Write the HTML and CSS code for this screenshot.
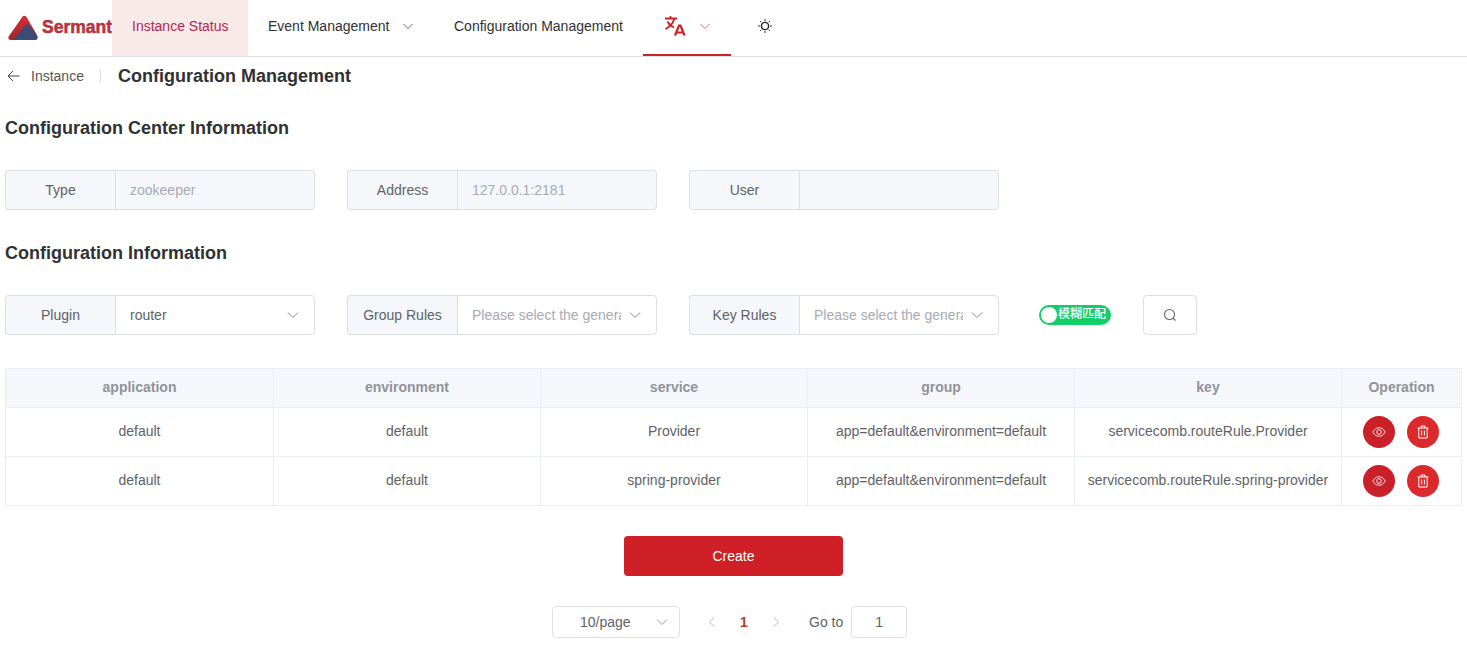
FILE: index.html
```html
<!DOCTYPE html>
<html lang="en">
    <head>
        <meta charset="UTF-8">
        <meta name="viewport" content="width=device-width, initial-scale=1.0">
        <title>Configuration Management</title>
        <link rel="stylesheet" href="styles.css">
    </head>
    <body>
        <!-- top menu -->
        <div class="header">
            <div class="logo">
                <svg class="logo-mark" width="30" height="25" viewBox="0 0 30 25">
                    <defs>
                        <linearGradient id="logoRed" x1="0.7" y1="0" x2="0.1" y2="1">
                            <stop offset="0" stop-color="#d92c34"/>
                            <stop offset="1" stop-color="#a3242c"/>
                        </linearGradient>
                    </defs>
                    <path d="M15 1 Q17 0 18.500 2 L29 20 Q31 25 26 25 L3 25 Q-1 25 1 21 Z" fill="url(#logoRed)"/>
                    <path d="M18.500 9 Q19.500 8 20.500 9.500 L29 21 Q30.500 25 26 25 L8 25 Q5.500 25 7 22.500 Z" fill="#3c4a75"/>
                </svg>
                <span class="logo-text">Sermant</span>
            </div>
            <div class="menu-item active">Instance Status</div>
            <div class="menu-item event">Event Management
                <svg class="chevron menu-chevron" viewBox="0 0 12 12"><path d="M1.500 4 L6 8.500 L10.500 4"/></svg>
            </div>
            <div class="menu-item">Configuration Management</div>
            <div class="menu-item lang">
                <svg class="lang-icon" width="22" height="22" viewBox="0 0 22 22">
                    <path d="M1 3.500 H13 M6.500 1 V3.500 M10.500 3.500 C9 8.500 5.500 12 1.500 14 M3.500 6.500 C5 9.500 7.500 11.500 10 12.500" fill="none" stroke="#cf2027" stroke-width="1.800"/>
                    <path d="M11 20.500 L15 10.500 H16.500 L20.500 20.500 M12.500 17.500 H19" fill="none" stroke="#cf2027" stroke-width="2.200"/>
                </svg>
                <svg class="chevron lang-chevron" viewBox="0 0 12 12"><path d="M1.500 4 L6 8.500 L10.500 4"/></svg>
            </div>
            <div class="theme">
                <svg width="14" height="14" viewBox="0 0 14 14">
                    <circle cx="7" cy="7" r="3.600" fill="none" stroke="#222" stroke-width="1.400"/>
                    <path d="M7 0 V2 M7 12 V14 M0 7 H2 M12 7 H14 M2 2 L3.300 3.300 M10.700 10.700 L12 12 M2 12 L3.300 10.700 M10.700 3.300 L12 2" stroke="#333" stroke-width="1"/>
                </svg>
            </div>
        </div>

        <div class="page-head">
            <svg class="back" width="14" height="14" viewBox="0 0 14 14"><path d="M13.500 7 H2 M7 2 L2 7 L7 12" fill="none" stroke="#444" stroke-width="1"/></svg>
            <span class="back-text">Instance</span>
            <span class="divider"></span>
            <span class="page-title">Configuration Management</span>
        </div>

        <div class="content">
            <div class="section-title">Configuration Center Information</div>
            <div class="form-row">
                <div class="field">
                    <div class="field-label">Type</div>
                    <div class="field-value disabled">zookeeper</div>
                </div>
                <div class="field">
                    <div class="field-label">Address</div>
                    <div class="field-value disabled">127.0.0.1:2181</div>
                </div>
                <div class="field">
                    <div class="field-label">User</div>
                    <div class="field-value disabled"></div>
                </div>
            </div>

            <div class="section-title second">Configuration Information</div>
            <div class="form-row">
                <div class="field">
                    <div class="field-label">Plugin</div>
                    <div class="field-value select">
                        <span class="select-text">router</span>
                        <svg class="chevron" viewBox="0 0 12 12"><path d="M1 3.500 L6 8.500 L11 3.500"/></svg>
                    </div>
                </div>
                <div class="field">
                    <div class="field-label">Group Rules</div>
                    <div class="field-value select">
                        <span class="select-text placeholder">Please select the generation rule</span>
                        <svg class="chevron" viewBox="0 0 12 12"><path d="M1 3.500 L6 8.500 L11 3.500"/></svg>
                    </div>
                </div>
                <div class="field">
                    <div class="field-label">Key Rules</div>
                    <div class="field-value select">
                        <span class="select-text placeholder">Please select the generation rule</span>
                        <svg class="chevron" viewBox="0 0 12 12"><path d="M1 3.500 L6 8.500 L11 3.500"/></svg>
                    </div>
                </div>
                <div class="switch">
                    <span class="switch-dot"></span>
                    <span class="switch-text">模糊匹配</span>
                </div>
                <div class="search-btn">
                    <svg width="14" height="14" viewBox="0 0 14 14"><circle cx="6.500" cy="6.500" r="5" fill="none" stroke="#666" stroke-width="1.100"/><path d="M10 10 L12.500 12.500" stroke="#666" stroke-width="1.100"/></svg>
                </div>
            </div>

            <table class="table">
                <colgroup>
                    <col class="col-wide"><col class="col-mid"><col class="col-mid"><col class="col-mid"><col class="col-mid"><col class="col-op">
                </colgroup>
                <thead>
                    <tr>
                        <th>application</th>
                        <th>environment</th>
                        <th>service</th>
                        <th>group</th>
                        <th>key</th>
                        <th>Operation</th>
                    </tr>
                </thead>
                <tbody>
                    <tr>
                        <td>default</td>
                        <td>default</td>
                        <td>Provider</td>
                        <td>app=default&amp;environment=default</td>
                        <td>servicecomb.routeRule.Provider</td>
                        <td class="op-cell">
                            <div class="ops">
                                <span class="round view"><svg width="14" height="14" viewBox="0 0 14 14"><path d="M0.800 7 C3 3.300 5 2.800 7 2.800 C9 2.800 11 3.300 13.200 7 C11 10.700 9 11.200 7 11.200 C5 11.200 3 10.700 0.800 7 Z" fill="none" stroke="#fff" stroke-width="0.900"/><circle cx="7" cy="7" r="2.300" fill="none" stroke="#fff" stroke-width="0.900"/></svg></span>
                                <span class="round del"><svg width="14" height="14" viewBox="0 0 14 14"><path d="M1.500 3 H12.500 M5 3 V1 H9 V3 M2.800 3 V13 H11.200 V3 M5.600 5.500 V10.500 M8.400 5.500 V10.500" fill="none" stroke="#fff" stroke-width="1"/></svg></span>
                            </div>
                        </td>
                    </tr>
                    <tr>
                        <td>default</td>
                        <td>default</td>
                        <td>spring-provider</td>
                        <td>app=default&amp;environment=default</td>
                        <td>servicecomb.routeRule.spring-provider</td>
                        <td class="op-cell">
                            <div class="ops">
                                <span class="round view"><svg width="14" height="14" viewBox="0 0 14 14"><path d="M0.800 7 C3 3.300 5 2.800 7 2.800 C9 2.800 11 3.300 13.200 7 C11 10.700 9 11.200 7 11.200 C5 11.200 3 10.700 0.800 7 Z" fill="none" stroke="#fff" stroke-width="0.900"/><circle cx="7" cy="7" r="2.300" fill="none" stroke="#fff" stroke-width="0.900"/></svg></span>
                                <span class="round del"><svg width="14" height="14" viewBox="0 0 14 14"><path d="M1.500 3 H12.500 M5 3 V1 H9 V3 M2.800 3 V13 H11.200 V3 M5.600 5.500 V10.500 M8.400 5.500 V10.500" fill="none" stroke="#fff" stroke-width="1"/></svg></span>
                            </div>
                        </td>
                    </tr>
                </tbody>
            </table>

            <div class="create-wrap">
                <div class="create-btn">Create</div>
            </div>

            <div class="pagination">
                <div class="page-size">
                    <span>10/page</span>
                    <svg class="chevron" viewBox="0 0 12 12"><path d="M1 3.500 L6 8.500 L11 3.500"/></svg>
                </div>
                <svg class="page-arrow first" viewBox="0 0 12 12"><path d="M8 1.500 L3.500 6 L8 10.500"/></svg>
                <span class="page-num">1</span>
                <svg class="page-arrow" viewBox="0 0 12 12"><path d="M4 1.500 L8.500 6 L4 10.500"/></svg>
                <span class="goto">Go to</span>
                <div class="goto-input">1</div>
            </div>
        </div>
    </body>
</html>
```

FILE: styles.css
```css
*{
    margin: 0;
    padding: 0;
    box-sizing: border-box;
}
body{
    font-family: "Liberation Sans", Arial, "Noto Sans CJK SC", sans-serif;
    font-size: 14px;
    color: #303133;
    background-color: #fff;
    overflow: hidden;
}
.header{
    height: 57px;
    display: flex;
    border-bottom: 1px solid #dcdfe6;
}
.logo{
    width: 112px;
    display: flex;
    align-items: center;
    padding: 0 0 2px 8px;
}
.logo-mark{
    flex: none;
}
.logo-text{
    margin-left: 4px;
    font-weight: bold;
    font-size: 17.500px;
    -webkit-text-stroke: 0.5px #b8333b;
    color: #b8333b;
    white-space: nowrap;
}
.menu-item{
    display: flex;
    align-items: center;
    padding: 0 20px 5px;
    height: 56px;
    white-space: nowrap;
}
.menu-item.active{
    width: 136px;
    background-color: #f9eaea;
    color: #b8274a;
}
.menu-item.event{
    width: 186px;
}
.menu-chevron{
    margin-left: 13px;
}
.lang{
    width: 88px;
    height: 56px;
    padding: 0 0 2px 21px;
    border-bottom: 2px solid #cf2027;
    color: #cf2027;
}
.lang-chevron{
    margin-left: 13px;
    stroke: #e26a70 !important;
}
.theme{
    width: 68px;
    display: flex;
    align-items: center;
    justify-content: center;
    padding-bottom: 5px;
}
.chevron{
    width: 12px;
    height: 12px;
    flex: none;
    fill: none;
    stroke: #666;
    stroke-width: 1;
}
.page-head{
    height: 38px;
    display: flex;
    align-items: center;
    padding-left: 6px;
}
.back-text{
    margin-left: 11px;
    color: #555;
}
.divider{
    width: 1px;
    height: 14px;
    margin: 0 17px 0 16px;
    background-color: #dcdfe6;
}
.page-title{
    font-size: 18px;
    font-weight: bold;
}
.content{
    padding: 0 5px;
}
.section-title{
    margin-top: 22px;
    height: 22px;
    line-height: 22px;
    font-size: 18px;
    font-weight: bold;
}
.section-title.second{
    margin-top: 32px;
}
.form-row{
    display: flex;
    align-items: center;
    margin-top: 31px;
}
.field{
    width: 310px;
    height: 40px;
    display: flex;
    margin-right: 32px;
}
.field-label{
    width: 110px;
    flex: none;
    display: flex;
    align-items: center;
    justify-content: center;
    background-color: #f5f7fa;
    border: 1px solid #dcdfe6;
    border-right: 0;
    border-radius: 4px 0 0 4px;
    color: #606266;
}
.field-value{
    flex: 1;
    min-width: 0;
    display: flex;
    align-items: center;
    padding: 0 14px;
    border: 1px solid #dcdfe6;
    border-radius: 0 4px 4px 0;
    color: #606266;
}
.field-value.disabled{
    background-color: #f5f7fa;
    color: #a8abb2;
}
.select-text{
    flex: 1;
    min-width: 0;
    overflow: hidden;
    white-space: nowrap;
}
.select-text.placeholder{
    color: #a8abb2;
}
.select .chevron{
    margin-left: 8px;
    margin-right: 1px;
    stroke: #888;
}
.switch{
    width: 72px;
    height: 20px;
    margin-left: 8px;
    display: flex;
    align-items: center;
    padding-left: 2px;
    border-radius: 10px;
    background-color: #13ce66;
    color: #fff;
    font-size: 12px;
}
.switch-dot{
    width: 16px;
    height: 16px;
    flex: none;
    border-radius: 50%;
    background-color: #fff;
}
.switch-text{
    margin-left: 1px;
    font-weight: 500;
    white-space: nowrap;
    height: 20px;
    line-height: 19px;
}
.search-btn{
    width: 54px;
    height: 40px;
    margin-left: 32px;
    display: flex;
    align-items: center;
    justify-content: center;
    border: 1px solid #dcdfe6;
    border-radius: 4px;
}
.table{
    width: 1456px;
    margin-top: 33px;
    table-layout: fixed;
    border-collapse: collapse;
}
.col-wide{
    width: 268px;
}
.col-mid{
    width: 267px;
}
.col-op{
    width: 120px;
}
.table th, .table td{
    border: 1px solid #ebeef5;
    text-align: center;
    padding: 0 0 2px;
    white-space: nowrap;
}
.table th{
    height: 39px;
    background-color: #f5f7fa;
    color: #909399;
    font-weight: bold;
}
.table td{
    height: 49px;
    color: #606266;
}
.table td.op-cell{
    padding: 0;
}
.ops{
    display: flex;
    justify-content: center;
    gap: 12px;
    padding-right: 2px;
}
.round{
    width: 32px;
    height: 32px;
    display: flex;
    align-items: center;
    justify-content: center;
    border-radius: 50%;
}
.round.view{
    background-color: #c9202a;
}
.round.del{
    background-color: #dc2a2c;
}
.create-wrap{
    display: flex;
    justify-content: center;
    margin-top: 30px;
}
.create-btn{
    width: 219px;
    height: 40px;
    display: flex;
    align-items: center;
    justify-content: center;
    border-radius: 4px;
    background-color: #cf2027;
    color: #fff;
}
.pagination{
    display: flex;
    align-items: center;
    margin-top: 30px;
    padding-left: 547px;
    color: #606266;
}
.page-size{
    width: 128px;
    height: 32px;
    display: flex;
    align-items: center;
    justify-content: space-between;
    padding: 0 11px 0 27px;
    border: 1px solid #dcdfe6;
    border-radius: 4px;
}
.page-size .chevron{
    stroke: #999;
}
.page-arrow{
    width: 12px;
    height: 12px;
    flex: none;
    fill: none;
    stroke: #b4b6bb;
    stroke-width: 1;
}
.page-arrow.first{
    margin-left: 26px;
}
.page-num{
    width: 52px;
    text-align: center;
    font-weight: bold;
    color: #b93a1f;
}
.goto{
    margin-left: 27px;
}
.goto-input{
    width: 56px;
    height: 32px;
    margin-left: 8px;
    display: flex;
    align-items: center;
    justify-content: center;
    border: 1px solid #dcdfe6;
    border-radius: 4px;
}
```
